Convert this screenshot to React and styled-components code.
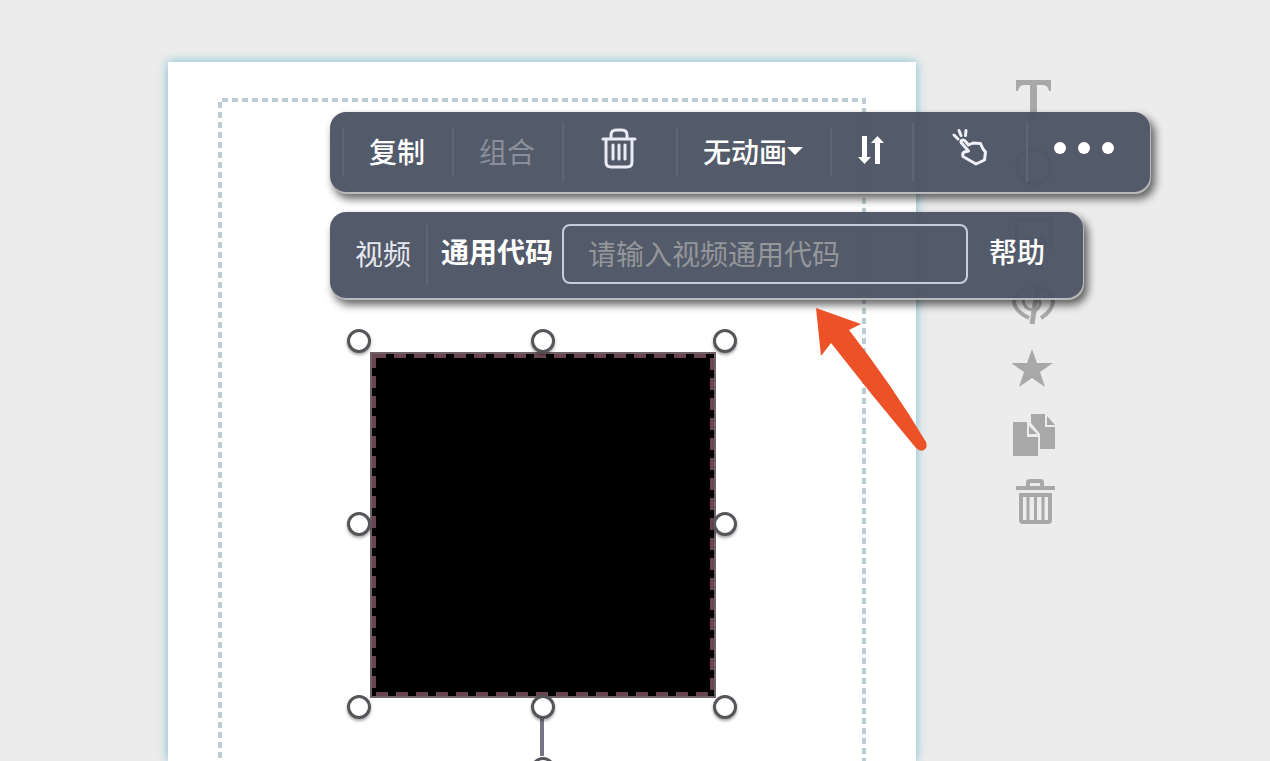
import React from 'react';
import styled, { createGlobalStyle, css } from 'styled-components';

const GlobalStyle = createGlobalStyle`
  *, *::before, *::after { box-sizing: border-box; }
  body {
    margin: 0;
    background: #ececec;
    font-family: "Noto Sans CJK SC", "Noto Sans", sans-serif;
    overflow: hidden;
  }
  button, input { font-family: inherit; }
`;

const Workspace = styled.main`
  display: flex;
  align-items: stretch;
  gap: 96px;
  height: 100vh;
  padding: 62px 0 0 168px;
  overflow: hidden;
`;

const Paper = styled.section`
  position: relative;
  z-index: 1;
  flex: 0 0 748px;
  display: flex;
  padding: 36px 50px 0;
  background: #fff;
  box-shadow: 0 0 10px rgba(70, 170, 195, 0.7);
`;

const SafeArea = styled.svg`
  flex: 1;
  height: 100%;
  fill: none;
  stroke: #bccdd3;
  stroke-width: 4;
  stroke-dasharray: 6 4;
`;

const VideoNode = styled.div`
  position: absolute;
  left: 202px;
  top: 290px;
  width: 346px;
  height: 346px;
  background: #000;
`;

const Outline = styled.svg`
  display: block;
  width: 100%;
  height: 100%;
  fill: none;
`;

const Handle = styled.button`
  position: absolute;
  left: ${(p) => p.$x}px;
  top: ${(p) => p.$y}px;
  width: 24px;
  height: 24px;
  padding: 0;
  border: 3px solid #55555a;
  border-radius: 50%;
  background: #fff;
  box-shadow: 0 2px 3px rgba(0, 0, 0, 0.35);
`;

const RotateStem = styled.span`
  position: absolute;
  left: 170px;
  top: 365px;
  width: 4px;
  height: 39px;
  background: #777583;
`;

const Toolbar = styled.div`
  position: absolute;
  z-index: 2;
  left: 162px;
  top: ${(p) => p.$top}px;
  display: flex;
  align-items: center;
  height: ${(p) => p.$height}px;
  padding: ${(p) => p.$padding};
  border-radius: 16px;
  background: rgba(77, 85, 100, 0.97);
  box-shadow: 1px 2px 0 #b9babd, 4px 6px 9px 1px rgba(0, 0, 0, 0.6);
`;

const textStyle = css`
  font-size: 28px;
  line-height: 40px;
  white-space: nowrap;
`;

const Divider = styled.span`
  width: 2px;
  height: ${(p) => (p.$tall ? 60 : 48)}px;
  background: #5e6573;
`;

const ToolButton = styled.button`
  ${textStyle}
  display: flex;
  align-items: center;
  justify-content: center;
  width: ${(p) => p.$width}px;
  height: 80px;
  padding: 0 2px ${(p) => p.$lift || 2}px 0;
  border: 0;
  background: none;
  color: #fff;
  font-weight: 500;

  &:disabled { color: #8a8f9b; font-weight: 400; }
`;

const PanelName = styled.span`
  ${textStyle}
  width: 71px;
  padding-bottom: 4px;
  color: #e6e8f0;
`;

const CodeLabel = styled.label`
  ${textStyle}
  width: 134px;
  padding: 0 0 8px 13px;
  color: #fff;
  font-weight: 700;
`;

const CodeInput = styled.input`
  width: 406px;
  height: 60px;
  margin-bottom: 2px;
  padding: 0 24px 2px;
  border: 2px solid #c8cddc;
  border-radius: 8px;
  outline: 0;
  background: transparent;
  color: #fff;
  font-size: 28px;

  &::placeholder { color: #94969a; opacity: 1; }
`;

const HelpLink = styled.a`
  ${textStyle}
  padding: 0 0 8px 21px;
  color: #fff;
  font-weight: 500;
  text-decoration: none;
`;

const Pointer = styled.svg`
  position: absolute;
  z-index: 3;
  left: 648px;
  top: 246px;
  width: 112px;
  height: 144px;
  pointer-events: none;
`;

const Rail = styled.nav`
  display: flex;
  flex-direction: column;
  padding-top: 4px;
`;

const RailButton = styled.button`
  display: flex;
  flex: none;
  align-items: center;
  justify-content: center;
  width: 44px;
  height: 67px;
  padding: 0;
  border: 0;
  background: none;
  color: #a8a8a8;
`;

const TrashIcon = () => (
  <svg width="36" height="42" viewBox="0 0 36 42" fill="none" stroke="#e9ebf6" strokeLinecap="round">
    <path d="M2 12H34" strokeWidth="3" />
    <path d="M10 11V8Q10 3 15 3H21Q26 3 26 8V11" strokeWidth="3" />
    <path d="M5 13V35Q5 40 10 40H26Q31 40 31 35V13" strokeWidth="3" />
    <path d="M12 18V32M18 18V32M24 18V32" strokeWidth="3" />
  </svg>
);

const CaretIcon = () => (
  <svg width="16" height="10" viewBox="0 0 16 10" fill="#fff"><path d="M0 1H16L8 9Z" /></svg>
);

const OrderIcon = () => (
  <svg width="28" height="30" viewBox="0 0 28 30" fill="#fff">
    <path d="M5 1H10V22H14L7.500 29L1 22H5Z" />
    <path d="M18 29H23V8H27L20.500 1L14 8H18Z" />
  </svg>
);

const TapIcon = () => (
  <svg width="38" height="40" viewBox="0 0 38 40" fill="none" stroke="#f0f1f8" strokeLinejoin="round" strokeLinecap="round">
    <path d="M11.500 12.500Q14 11 16 14L18.500 17L23 15L30.500 15.500L33 21L35.500 24L34.500 32L26 36L13 28.500Q12 25 14.500 24L18.500 23L11.500 15Q10.500 13.500 11.500 12.500Z" strokeWidth="3" />
    <path d="M4 7L8 11M9 2.500L11 7.500M16 2.500L15.500 7.500" strokeWidth="3" />
  </svg>
);

const MoreIcon = () => (
  <svg width="62" height="14" viewBox="0 0 62 14" fill="#fff">
    <circle cx="8" cy="7" r="6" /><circle cx="32" cy="7" r="6" /><circle cx="56" cy="7" r="6" />
  </svg>
);

const RailIcon = ({ children }) => (
  <svg width="44" height="48" viewBox="0 0 44 48" fill="currentColor">{children}</svg>
);

const railItems = [
  ['文字', <path d="M4 4H39V15H37Q36 9 31 9H25V38Q25 41 30 41V43H14V41Q18 41 18 38V9H12Q7 9 6 15H4Z" />],
  ['形状', <circle cx="22" cy="24" r="17" fill="none" stroke="currentColor" strokeWidth="4" />],
  ['图片', <path d="M3 8H41V40H3ZM7 12V35L17 24L24 31L30 25L37 34V12Z" fillRule="evenodd" />],
  ['代码', (
    <g fill="none" stroke="currentColor" strokeWidth="4">
      <path d="M15 10Q3 16 2 25Q3 34 17 41M28 10Q40 16 41 25Q40 34 29 41" />
      <path d="M26 8L20 47" strokeWidth="5" />
      <path d="M11 22Q12 32 20 33M23 20Q29 22 28 28Q26 33 22 34" strokeWidth="3" />
    </g>
  )],
  ['收藏', <path d="M20 5L25 19H41L28 28L33 43L20 34L7 43L12 28L-1 19H15Z" />],
  ['复制页面', (
    <g>
      <path d="M1 11H15V26H26V45H1Z" />
      <path d="M17 15V23H25ZM19 3H33V16H43V38H28V23L19 12Z" />
      <path d="M35 5V14H43Z" />
    </g>
  )],
  ['删除页面', (
    <g fill="none" stroke="currentColor">
      <path d="M4 10H43" strokeWidth="4" />
      <path d="M16 9V4Q16 3 18 3H28Q30 3 30 4V9" strokeWidth="4" />
      <path d="M9 17H38V42Q38 44 36 44H11Q9 44 9 42Z" strokeWidth="4" />
      <path d="M16 18V43M23.500 18V43M31 18V43" strokeWidth="3" />
    </g>
  )],
];

const handles = [
  [-23, -23], [161, -23], [343, -23],
  [-23, 160], [343, 160],
  [-23, 343], [161, 343], [343, 343], [161, 405],
];

export default function App() {
  return (
    <>
      <GlobalStyle />
      <Workspace>
        <Paper>
          <SafeArea aria-hidden="true">
            <path d="M2 1000V2H646V1000" />
          </SafeArea>

          <VideoNode>
            <Outline viewBox="0 0 346 346" aria-hidden="true">
              <rect x="1" y="1" width="344" height="344" stroke="#706168" strokeWidth="2" />
              <rect x="4" y="4" width="338" height="338" stroke="#694553" strokeWidth="4" strokeDasharray="12 8" />
            </Outline>
            <RotateStem />
            {handles.map(([x, y]) => (
              <Handle key={`${x}:${y}`} $x={x} $y={y} aria-label="调整" />
            ))}
          </VideoNode>

          <Toolbar $top={50} $height={80} $padding="0 10px 0 12px" role="toolbar">
            <Divider />
            <ToolButton $width={108}>复制</ToolButton>
            <Divider />
            <ToolButton $width={108} disabled>组合</ToolButton>
            <Divider $tall />
            <ToolButton $width={112} $lift={8} aria-label="删除"><TrashIcon /></ToolButton>
            <Divider />
            <ToolButton $width={152} aria-haspopup="menu">无动画<CaretIcon /></ToolButton>
            <Divider />
            <ToolButton $width={80} $lift={4} aria-label="排序"><OrderIcon /></ToolButton>
            <Divider $tall />
            <ToolButton $width={112} $lift={8} aria-label="点击事件"><TapIcon /></ToolButton>
            <Divider $tall />
            <ToolButton $width={112} $lift={8} aria-label="更多"><MoreIcon /></ToolButton>
          </Toolbar>

          <Toolbar $top={150} $height={86} $padding="0 38px 0 25px">
            <PanelName>视频</PanelName>
            <Divider $tall />
            <CodeLabel htmlFor="video-code">通用代码</CodeLabel>
            <CodeInput id="video-code" placeholder="请输入视频通用代码" />
            <HelpLink href="#help">帮助</HelpLink>
          </Toolbar>

          <Pointer viewBox="0 0 112 144" fill="#ec5128" aria-hidden="true">
            <path d="M0 0L45 16L33 22Q76 77 110 134Q112 139 108 142Q104 144 100 140Q57 89 15 35L5 48Z" />
          </Pointer>
        </Paper>

        <Rail aria-label="元素">
          {railItems.map(([label, icon]) => (
            <RailButton key={label} aria-label={label}>
              <RailIcon>{icon}</RailIcon>
            </RailButton>
          ))}
        </Rail>
      </Workspace>
    </>
  );
}
